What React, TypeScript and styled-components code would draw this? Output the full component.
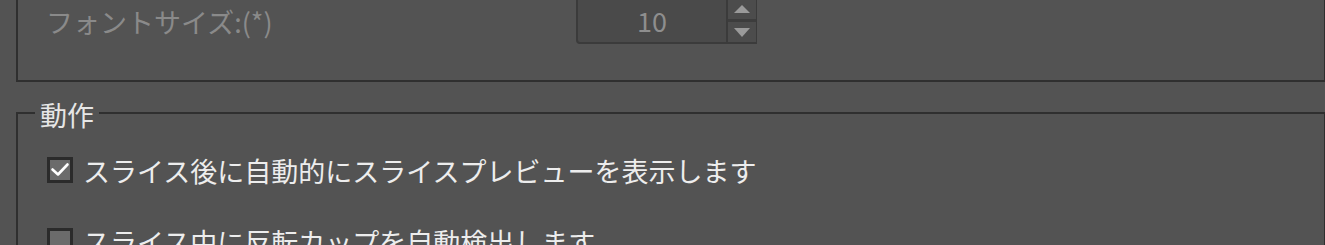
import styled, { createGlobalStyle } from 'styled-components'

const GlobalStyle = createGlobalStyle`
  html, body {
    margin: 0;
    padding: 0;
    background: #535353;
    overflow: hidden;
  }
  body {
    font-family: "Noto Sans CJK JP", "Noto Sans", sans-serif;
  }
`

const Panel = styled.div`
  margin-top: -10px;
  padding-left: 16px;
  width: 1310px;
`

const GroupTop = styled.div`
  box-sizing: border-box;
  height: 92px;
  border: 2px solid #2f2f2f;
  padding: 4px 0 0 28px;
`

const FieldRow = styled.div`
  display: grid;
  grid-template-columns: 530px 181px;
  height: 48px;
`

const FieldLabel = styled.span<{ $disabled?: boolean }>`
  align-self: center;
  padding-top: 4px;
  font-size: 27px;
  line-height: 36px;
  color: ${(p) => (p.$disabled ? '#8a8a8a' : '#ececec')};
  white-space: nowrap;
`

const SpinBox = styled.div`
  box-sizing: border-box;
  display: flex;
  height: 48px;
  background: #4a4a4a;
  border: 2px solid #3b3b3b;
  border-right-width: 1px;
  border-radius: 0 0 0 4px;
`

const SpinValue = styled.div`
  flex: 1;
  display: flex;
  align-items: center;
  justify-content: center;
  font-size: 27px;
  color: #8e8e8e;
  border-right: 2px solid #3b3b3b;
`

const SpinButtons = styled.div`
  width: 28px;
  display: flex;
  flex-direction: column;
  background: #4c4c4c;
`

const SpinButton = styled.div<{ $h: number }>`
  height: ${(p) => p.$h}px;
  display: flex;
  align-items: center;
  justify-content: center;
`

const SpinSeparator = styled.div`
  height: 3px;
  background: #3d3d3d;
`

const Arrow = styled.div<{ $down?: boolean }>`
  width: 0;
  height: 0;
  border-left: 8px solid transparent;
  border-right: 8px solid transparent;
  ${(p) =>
    p.$down ? 'border-top: 9px solid #9a9a9a;' : 'border-bottom: 8px solid #9a9a9a;'}
`

const Group = styled.fieldset`
  margin: 13px 0 0;
  padding: 0;
  min-inline-size: 0;
  border: 2px solid #2f2f2f;
  height: 300px;
`

const Legend = styled.legend`
  margin-left: 17px;
  padding: 4px 5px 0;
  font-size: 27px;
  line-height: 32px;
  color: #e6e6e6;
`

const OptionList = styled.div`
  display: flex;
  flex-direction: column;
  gap: 27px;
  padding: 17px 0 0 29px;
`

const OptionRow = styled.label`
  display: flex;
  align-items: center;
  gap: 10px;
  height: 44px;
  font-size: 27px;
  color: #ededed;
  white-space: nowrap;
`

const CheckBox = styled.span`
  box-sizing: border-box;
  width: 26px;
  height: 26px;
  flex: none;
  background: #6b6b6b;
  border: 3px solid #2b2b2b;
  display: flex;
  align-items: center;
  justify-content: center;
`

const Check = () => (
  <svg width="20" height="20" viewBox="0 0 20 20">
    <path
      d="M2.5 9.5 L8 14.5 L17.5 4.5"
      fill="none"
      stroke="#ffffff"
      strokeWidth="2.6"
      strokeLinecap="round"
      strokeLinejoin="round"
    />
  </svg>
)

type TOption = {
  label: string
  checked: boolean
}

const options: TOption[] = [
  { label: 'スライス後に自動的にスライスプレビューを表示します', checked: true },
  { label: 'スライス中に反転カップを自動検出します', checked: false },
]

export default function App() {
  return (
    <>
      <GlobalStyle />
      <Panel>
        <GroupTop>
          <FieldRow>
            <FieldLabel $disabled>フォントサイズ:(*)</FieldLabel>
            <SpinBox>
              <SpinValue>10</SpinValue>
              <SpinButtons>
                <SpinButton $h={21}>
                  <Arrow />
                </SpinButton>
                <SpinSeparator />
                <SpinButton $h={20}>
                  <Arrow $down />
                </SpinButton>
              </SpinButtons>
            </SpinBox>
          </FieldRow>
        </GroupTop>
        <Group>
          <Legend>動作</Legend>
          <OptionList>
            {options.map((o) => (
              <OptionRow key={o.label}>
                <CheckBox>{o.checked && <Check />}</CheckBox>
                {o.label}
              </OptionRow>
            ))}
          </OptionList>
        </Group>
      </Panel>
    </>
  )
}
